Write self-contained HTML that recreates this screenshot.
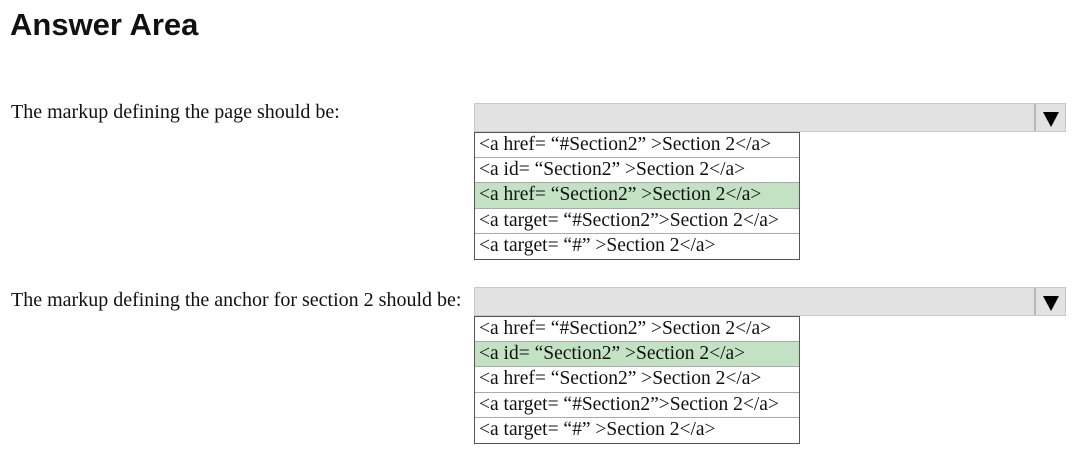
<!DOCTYPE html>
<html><head><style>
body{margin:0;width:1079px;height:455px;background:#fff;position:relative;overflow:hidden;font-family:"Liberation Serif",serif;color:#111}
h1{position:absolute;left:10px;top:7px;margin:0;font:bold 31px "Liberation Sans",sans-serif;color:#111}
.lbl{position:absolute;left:11px;font-size:20px}
.bar{position:absolute;left:474px;width:592px;height:29px;background:#e2e2e2;border:1px solid #c8c8c8;box-sizing:border-box}
.arr{position:absolute;right:0;top:0;width:29px;height:27px;border-left:2px solid #b8b8b8}
.arr:after{content:"";position:absolute;left:7px;top:8px;border-left:8px solid transparent;border-right:8px solid transparent;border-top:15px solid #000}
.list{position:absolute;left:474px;width:326px;border:1px solid #555;box-sizing:border-box}
.list div{height:25.2px;line-height:24px;font-size:19.5px;padding-left:4px;border-bottom:1px solid #aaa;box-sizing:border-box;white-space:nowrap}
.list div:last-child{border-bottom:none}
.g{background:#c3e2c3}
</style></head><body>
<h1>Answer Area</h1>
<div class="lbl" style="top:101px">The markup defining the page should be:</div>
<div class="bar" style="top:103px"><div class="arr"></div></div>
<div class="list" style="top:132px">
<div>&lt;a href= “#Section2” &gt;Section 2&lt;/a&gt;</div>
<div>&lt;a id= “Section2” &gt;Section 2&lt;/a&gt;</div>
<div class="g">&lt;a href= “Section2” &gt;Section 2&lt;/a&gt;</div>
<div>&lt;a target= “#Section2”&gt;Section 2&lt;/a&gt;</div>
<div>&lt;a target= “#” &gt;Section 2&lt;/a&gt;</div>
</div>
<div class="lbl" style="top:289px">The markup defining the anchor for section 2 should be:</div>
<div class="bar" style="top:287px"><div class="arr"></div></div>
<div class="list" style="top:316px">
<div>&lt;a href= “#Section2” &gt;Section 2&lt;/a&gt;</div>
<div class="g">&lt;a id= “Section2” &gt;Section 2&lt;/a&gt;</div>
<div>&lt;a href= “Section2” &gt;Section 2&lt;/a&gt;</div>
<div>&lt;a target= “#Section2”&gt;Section 2&lt;/a&gt;</div>
<div>&lt;a target= “#” &gt;Section 2&lt;/a&gt;</div>
</div>
</body></html>
